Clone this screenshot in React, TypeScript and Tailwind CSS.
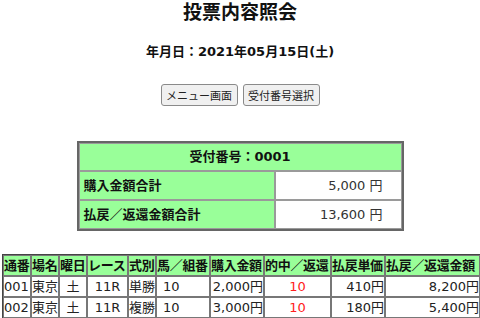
import React from "react";

const F = { fontFamily: '"DejaVu Sans", "Noto Sans CJK JP", sans-serif' };

const rows = [
  { no: "001", place: "東京", day: "土", race: "11R", kind: "単勝", horse: "10", buy: "2,000円", hit: "10", unit: "410円", pay: "8,200円" },
  { no: "002", place: "東京", day: "土", race: "11R", kind: "複勝", horse: "10", buy: "3,000円", hit: "10", unit: "180円", pay: "5,400円" },
];

const heads = [
  ["通番", "w-[28px]"],
  ["場名", "w-[28px]"],
  ["曜日", "w-[28px]"],
  ["レース", "w-[41px]"],
  ["式別", "w-[28px]"],
  ["馬／組番", "w-[54px]"],
  ["購入金額", "w-[54px]"],
  ["的中／返還", "w-[67px]"],
  ["払戻単価", "w-[54px]"],
  ["払戻／返還金額", "w-[95px]"],
];

export default function App() {
  const td = "border border-[#777] h-[21px] p-0 whitespace-nowrap overflow-hidden";
  return (
    <div className="w-[480px] h-[318px] bg-white text-[#222] overflow-hidden" style={F}>
      <div className="flex flex-col items-center">
        <h1 className="text-[19px] font-bold leading-[22px] text-[#111]" style={{ fontFamily: '"Noto Sans CJK JP", sans-serif' }}>投票内容照会</h1>
        <div className="mt-[20px] text-[13px] font-bold leading-[20px] text-[#111]">年月日：2021年05月15日(土)</div>
        <div className="mt-[22px] flex gap-[5px]">
          <button className="h-[22px] w-[77px] rounded-[3px] border border-[#8a8a8a] bg-[#f0f0f0] text-[11px] text-[#222] leading-none" style={{ fontFamily: '"Noto Sans CJK JP", sans-serif' }}>メニュー画面</button>
          <button className="h-[22px] w-[77px] rounded-[3px] border border-[#8a8a8a] bg-[#f0f0f0] text-[11px] text-[#222] leading-none" style={{ fontFamily: '"Noto Sans CJK JP", sans-serif' }}>受付番号選択</button>
        </div>
        <table className="mt-[35px] w-[327px] border-separate border-spacing-0 border-2 border-[#666] text-[13px]">
          <tbody>
            <tr>
              <td colSpan={2} className="h-[28px] border border-[#9a9a9a] bg-[#99ff99] text-center font-bold text-[#111]">受付番号：0001</td>
            </tr>
            <tr>
              <td className="h-[29px] w-[196px] border border-[#9a9a9a] bg-[#99ff99] pl-[4px] font-bold text-[#111]">購入金額合計</td>
              <td className="h-[29px] border border-[#9a9a9a] bg-white pr-[18px] text-right text-[#333]">5,000 円</td>
            </tr>
            <tr>
              <td className="h-[29px] border border-[#9a9a9a] bg-[#99ff99] pl-[4px] font-bold text-[#111]">払戻／返還金額合計</td>
              <td className="h-[29px] border border-[#9a9a9a] bg-white pr-[18px] text-right text-[#333]">13,600 円</td>
            </tr>
          </tbody>
        </table>
      </div>
      <table className="mt-[23px] ml-[2px] w-[477px] table-fixed border-separate border-spacing-0 border border-[#444] text-[13px] leading-[19px]">
        <thead>
          <tr>
            {heads.map(([h, w]) => (
              <th key={h} className={`${td} ${w} bg-[#99ff99] font-bold text-left text-[#111] tracking-[-0.3px]`}>{h}</th>
            ))}
          </tr>
        </thead>
        <tbody>
          {rows.map((r) => (
            <tr key={r.no}>
              <td className={td}>{r.no}</td>
              <td className={td}>{r.place}</td>
              <td className={`${td} text-center`}>{r.day}</td>
              <td className={`${td} text-center`}>{r.race}</td>
              <td className={td}>{r.kind}</td>
              <td className={`${td} pl-[6px]`}>{r.horse}</td>
              <td className={`${td} text-right`}>{r.buy}</td>
              <td className={`${td} text-center text-[#ff2020]`}>{r.hit}</td>
              <td className={`${td} text-right`}>{r.unit}</td>
              <td className={`${td} text-right`}>{r.pay}</td>
            </tr>
          ))}
        </tbody>
      </table>
    </div>
  );
}
